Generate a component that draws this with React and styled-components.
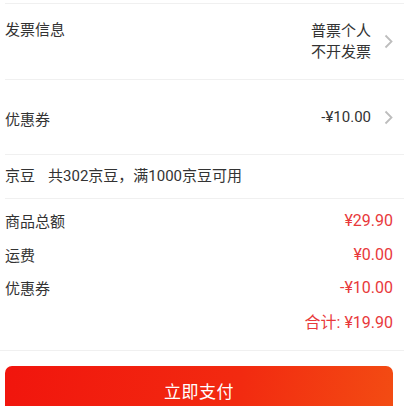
import React from 'react'
import styled, { createGlobalStyle } from 'styled-components'

const Global = createGlobalStyle`
    body {
        margin: 0;
        background: #fff;
        font-family: Roboto, "Noto Sans CJK SC", sans-serif;
        color: #333;
        font-size: 15px;
    }
`;

const Page = styled.div`
    width: 404px;
    height: 406px;
    overflow: hidden;
    padding-top: 3px;
    box-sizing: border-box;
`;

const Section = styled.div`
    margin-left: 5px;
    padding-right: 11px;
    border-top: 1px solid #f0f0f0;
`;

const Row = styled.div`
    display: flex;
    align-items: ${props => props.align || 'center'};
    justify-content: space-between;
    height: ${props => props.h}px;
    padding: ${props => props.pad || '0'};
    box-sizing: border-box;
`;

const Label = styled.span`
    line-height: 21px;
    padding-top: ${props => props.shift || 0}px;
`;

const Right = styled.div`
    display: flex;
    align-items: center;
    align-self: center;
    gap: 13px;
`;

const Value = styled.div`
    text-align: right;
    line-height: 21px;
`;

const Chevron = () => (
    <svg width="9" height="15" viewBox="0 0 9 15">
        <path d="M1.5 1.5 L7.5 7.5 L1.5 13.5" fill="none" stroke="#bdbdbd" strokeWidth="1.8" />
    </svg>
);

const Beans = styled.span`
    margin-left: 13px;
`;

const Totals = styled.div`
    padding: 5px 0 12px;
`;

const Line = styled.div`
    display: flex;
    justify-content: ${props => props.end ? 'flex-end' : 'space-between'};
    align-items: center;
    height: 33.5px;
`;

const Red = styled.span`
    color: #e8393b;
    font-size: 16px;
`;

const Footer = styled.div`
    border-top: 1px solid #f0f0f0;
    padding: 15px 11px 0 5px;
`;

const PayButton = styled.button`
    display: block;
    width: 100%;
    height: 48px;
    border: none;
    border-radius: 7px;
    background: linear-gradient(100deg, #f1150d 0%, #f22a10 60%, #f34c13 100%);
    color: #fff;
    font-family: inherit;
    font-size: 17px;
    letter-spacing: 0.5px;
`;

export default function App() {
    const totals = [
        ['商品总额', '¥29.90'],
        ['运费', '¥0.00'],
        ['优惠券', '-¥10.00'],
    ];

    return (
        <Page>
            <Global />
            <Section>
                <Row h={75} align="flex-start" pad="16px 0">
                    <Label>发票信息</Label>
                    <Right>
                        <Value>普票个人<br />不开发票</Value>
                        <Chevron />
                    </Right>
                </Row>
            </Section>
            <Section>
                <Row h={74}>
                    <Label shift={6}>优惠券</Label>
                    <Right>
                        <Value>-¥10.00</Value>
                        <Chevron />
                    </Right>
                </Row>
            </Section>
            <Section>
                <Row h={43}>
                    <Label>京豆<Beans>共302京豆，满1000京豆可用</Beans></Label>
                </Row>
            </Section>
            <Section>
                <Totals>
                    {totals.map(([k, v]) => (
                        <Line key={k}>
                            <span>{k}</span>
                            <Red>{v}</Red>
                        </Line>
                    ))}
                    <Line end>
                        <Red>合计: ¥19.90</Red>
                    </Line>
                </Totals>
            </Section>
            <Footer>
                <PayButton>立即支付</PayButton>
            </Footer>
        </Page>
    )
}
